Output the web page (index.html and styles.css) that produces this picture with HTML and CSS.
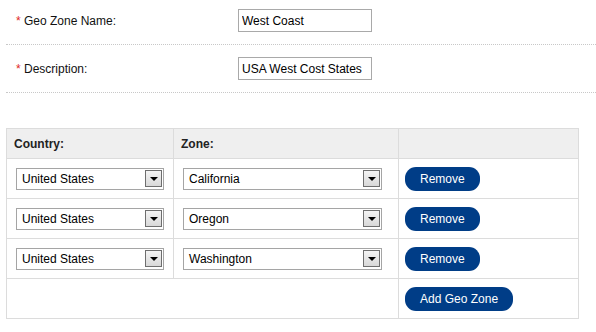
FILE: index.html
```html
<!DOCTYPE html>
<html lang="en">
<head>
    <meta charset="UTF-8">
    <title>Geo Zone</title>
    <link rel="stylesheet" href="styles.css">
</head>
<body>
    <div class="page">
        <div class="form-row">
            <label class="form-label"><span class="req">*</span> Geo Zone Name:</label>
            <input type="text" class="text-input" value="West Coast">
        </div>
        <div class="form-row">
            <label class="form-label"><span class="req">*</span> Description:</label>
            <input type="text" class="text-input" value="USA West Cost States">
        </div>

        <table class="zone-table">
            <thead>
                <tr>
                    <th class="col-country">Country:</th>
                    <th class="col-zone">Zone:</th>
                    <th class="col-action"></th>
                </tr>
            </thead>
            <tbody>
                <tr>
                    <td><div class="select-box country"><span class="select-text">United States</span><span class="arrow"></span></div></td>
                    <td><div class="select-box zone"><span class="select-text">California</span><span class="arrow"></span></div></td>
                    <td class="action"><button class="btn">Remove</button></td>
                </tr>
                <tr>
                    <td><div class="select-box country"><span class="select-text">United States</span><span class="arrow"></span></div></td>
                    <td><div class="select-box zone"><span class="select-text">Oregon</span><span class="arrow"></span></div></td>
                    <td class="action"><button class="btn">Remove</button></td>
                </tr>
                <tr>
                    <td><div class="select-box country"><span class="select-text">United States</span><span class="arrow"></span></div></td>
                    <td><div class="select-box zone"><span class="select-text">Washington</span><span class="arrow"></span></div></td>
                    <td class="action"><button class="btn">Remove</button></td>
                </tr>
                <tr>
                    <td colspan="2"></td>
                    <td class="action"><button class="btn">Add Geo Zone</button></td>
                </tr>
            </tbody>
        </table>
    </div>
</body>
</html>
```

FILE: styles.css
```css
* {
    margin: 0;
    padding: 0;
    box-sizing: border-box;
    font-family: 'Liberation Sans', Arial, sans-serif;
}

body {
    background: #fff;
    color: #111;
    font-size: 12px;
}

.page {
    padding-left: 6px;
}

/* Form rows */
.form-row {
    display: flex;
    align-items: center;
    padding: 9px 0 12px;
    border-bottom: 1px dotted #c8c8c8;
}

.form-row + .form-row {
    padding-top: 12px;
}

.form-label {
    width: 232px;
    padding-left: 10px;
    font-size: 12px;
}

.req {
    color: #e0281e;
}

.text-input {
    width: 134px;
    height: 23px;
    border: 1px solid #a9a9a9;
    padding: 0 3px;
    font-size: 12px;
    color: #000;
    outline: none;
}

/* Zone table */
.zone-table {
    margin-top: 35px;
    border-collapse: collapse;
    width: 573px;
}

.zone-table th,
.zone-table td {
    border: 1px solid #dcdcdc;
    text-align: left;
    vertical-align: middle;
}

.zone-table th {
    background: #efefef;
    height: 30px;
    padding: 0 7px;
    font-weight: bold;
    color: #222;
}

.zone-table td {
    height: 40px;
    padding: 0 9px;
}

.zone-table td.action {
    padding-left: 6px;
}

.col-country { width: 167px; }
.col-zone { width: 225px; }

.select-box {
    display: flex;
    align-items: center;
    height: 22px;
    border: 1px solid #a5a5a5;
    background: #fff;
    padding: 0 1px 0 5px;
}

.select-box.country { width: 148px; }
.select-box.zone { width: 199px; }

.select-text {
    flex: 1;
    color: #000;
}

.arrow {
    width: 17px;
    height: 17px;
    border: 1px solid #6e6e6e;
    background: linear-gradient(#f4f4f4, #d8d8d8);
    display: flex;
    align-items: center;
    justify-content: center;
}

.arrow::after {
    content: "";
    border-left: 4px solid transparent;
    border-right: 4px solid transparent;
    border-top: 4px solid #000;
    margin-top: 1px;
}

.btn {
    height: 24px;
    padding: 0 15px;
    border: none;
    border-radius: 11px;
    background: #003d87;
    color: #fff;
    font-size: 12px;
    cursor: pointer;
}
```
